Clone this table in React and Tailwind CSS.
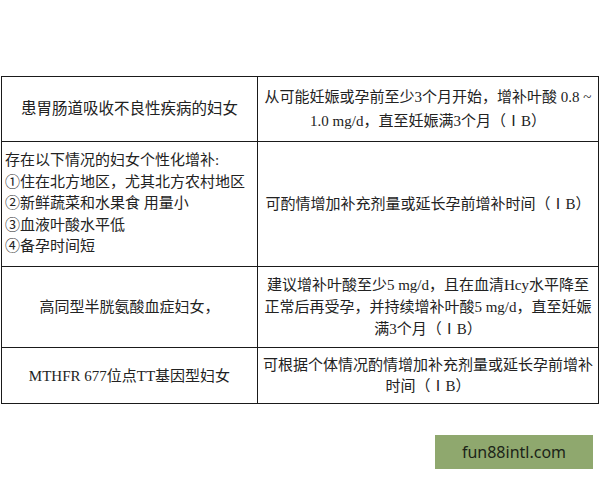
export default function App() {
  const font = { fontFamily: '"Liberation Serif", "Noto Sans CJK SC", serif' };
  return (
    <div className="relative w-[600px] h-[480px] bg-white overflow-hidden" style={font}>
      <div className="pt-[76px] pl-[1px] w-[599px]">
        <table className="w-full border-collapse text-[15px] leading-[22px] text-[#222]">
          <colgroup>
            <col className="w-[256px]" />
            <col />
          </colgroup>
          <tbody>
            <tr className="h-[65px]">
              <td className="border-[1.5px] border-[#1a1a1a] text-center text-[15.5px] px-1">患胃肠道吸收不良性疾病的妇女</td>
              <td className="border-[1.5px] border-[#1a1a1a] text-center px-1 leading-[24px]">
                从可能妊娠或孕前至少3个月开始，增补叶酸 0.8 ~<br />1.0 mg/d，直至妊娠满3个月（ⅠB）
              </td>
            </tr>
            <tr className="h-[125px]">
              <td className="border-[1.5px] border-[#1a1a1a] text-left pl-[3px] leading-[21.5px]">
                存在以下情况的妇女个性化增补:<br />
                ①住在北方地区，尤其北方农村地区<br />
                ②新鲜蔬菜和水果食 用量小<br />
                ③血液叶酸水平低<br />
                ④备孕时间短
              </td>
              <td className="border-[1.5px] border-[#1a1a1a] text-center px-1">可酌情增加补充剂量或延长孕前增补时间（ⅠB）</td>
            </tr>
            <tr className="h-[81px]">
              <td className="border-[1.5px] border-[#1a1a1a] text-center">高同型半胱氨酸血症妇女，</td>
              <td className="border-[1.5px] border-[#1a1a1a] text-center px-1">
                建议增补叶酸至少5 mg/d，且在血清Hcy水平降至<br />正常后再受孕，并持续增补叶酸5 mg/d，直至妊娠<br />满3个月（ⅠB）
              </td>
            </tr>
            <tr className="h-[56px]">
              <td className="border-[1.5px] border-[#1a1a1a] text-center">MTHFR 677位点TT基因型妇女</td>
              <td className="border-[1.5px] border-[#1a1a1a] text-center px-1 leading-[21px]">
                可根据个体情况酌情增加补充剂量或延长孕前增补<br />时间（ⅠB）
              </td>
            </tr>
          </tbody>
        </table>
      </div>
      <div
        className="absolute left-[435px] top-[435px] w-[158px] h-[34px] bg-[#8fa86e] flex items-center justify-center text-[16px] text-[#1c2418]"
        style={{ fontFamily: '"Noto Sans", sans-serif' }}
      >
        fun88intl.com
      </div>
    </div>
  );
}
